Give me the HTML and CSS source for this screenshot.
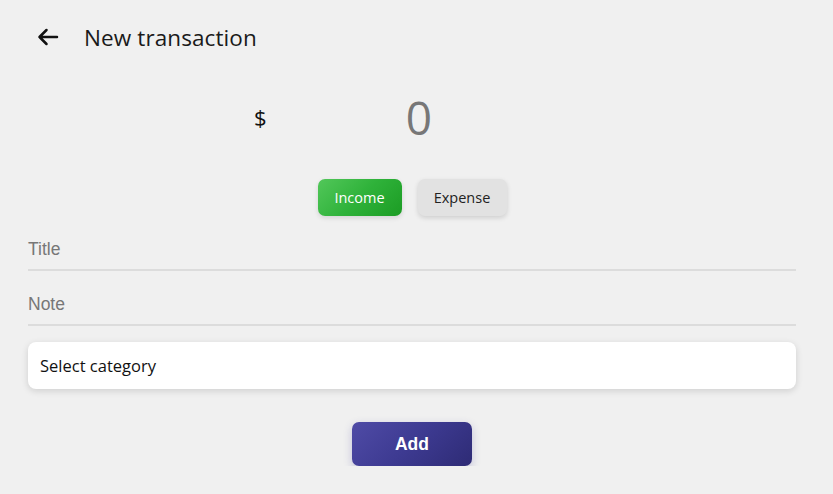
FILE: index.html
```html
<!DOCTYPE html>
<html>
<head>
<meta charset="utf-8">
<link rel="stylesheet" href="styles.css">
</head>
<body>
<div class="page">
  <header class="header">
    <button class="back" aria-label="Back">
      <svg width="24" height="24" viewBox="0 0 24 24" fill="none" stroke="#111" stroke-width="2.5" stroke-linecap="round" stroke-linejoin="round"><path d="M21 12H3.5M10.5 5l-7 7 7 7"/></svg>
    </button>
    <h1 class="title">New transaction</h1>
  </header>

  <div class="amount-row">
    <span class="currency">$</span>
    <span class="amount">0</span>
  </div>

  <div class="type-row">
    <button class="type-btn income">Income</button>
    <button class="type-btn expense">Expense</button>
  </div>

  <div class="field"><span class="placeholder">Title</span></div>
  <div class="field"><span class="placeholder">Note</span></div>

  <div class="select">Select category</div>

  <div class="submit-row">
    <button class="add">Add</button>
  </div>
</div>
</body>
</html>
```
FILE: styles.css
```css
html, body {
  margin: 0;
  padding: 0;
  background: #f0f0f0;
}
body {
  font-family: "Open Sans", "Noto Sans", sans-serif;
  color: #111;
}
.page {
  padding: 0 37px 0 28px;
  display: flex;
  flex-direction: column;
}
.header {
  display: flex;
  align-items: center;
  height: 74px;
  gap: 24px;
  padding-left: 8px;
}
.back {
  border: none;
  background: none;
  padding: 0;
  width: 24px;
  height: 24px;
  display: flex;
}
.title {
  margin: 0;
  font-size: 22.5px;
  font-weight: 400;
  color: #1a1a1a;
  letter-spacing: 0.1px;
}
.amount-row {
  display: flex;
  justify-content: center;
  align-items: center;
  height: 86px;
}
.currency {
  font-size: 22px;
  width: 14px;
}
.amount {
  width: 302px;
  text-align: center;
  font-size: 46px;
  color: #777;
}
.type-row {
  display: flex;
  justify-content: center;
  gap: 16px;
  margin-top: 19px;
}
.type-btn {
  height: 37px;
  border: none;
  border-radius: 7px;
  font-family: "Open Sans", "Noto Sans", sans-serif;
  font-size: 14.5px;
  padding: 0;
}
.income {
  width: 84px;
  color: #fff;
  background: linear-gradient(135deg, #52c75a 0%, #2fb23a 50%, #1c9c24 100%);
  box-shadow: 0 2px 5px rgba(0,0,0,0.12);
}
.expense {
  width: 89px;
  color: #222;
  background: #e2e2e2;
  box-shadow: 0 2px 5px rgba(0,0,0,0.14);
}
.field {
  height: 51px;
  display: flex;
  align-items: center;
  border-bottom: 2px solid #dcdcdc;
  margin-top: 2px;
}
.field + .field {
  margin-top: 2px;
}
.placeholder {
  font-family: "Liberation Sans", Arial, sans-serif;
  font-size: 17.5px;
  color: #777;
  margin-top: 12px;
}
.select {
  margin-top: 16px;
  height: 47px;
  background: #fff;
  border-radius: 8px;
  box-shadow: 0 2px 7px rgba(0,0,0,0.14);
  display: flex;
  align-items: center;
  padding-left: 12px;
  font-size: 16.5px;
  color: #111;
}
.submit-row {
  display: flex;
  justify-content: center;
  margin-top: 33px;
}
.add {
  width: 120px;
  height: 44px;
  border: none;
  border-radius: 7px;
  background: linear-gradient(135deg, #4f4ba6 0%, #3d3a91 50%, #2e2b75 100%);
  color: #fff;
  font-family: "Liberation Sans", Arial, sans-serif;
  font-weight: 700;
  font-size: 17.5px;
  box-shadow: 0 3px 8px rgba(60,55,150,0.25);
}
```
